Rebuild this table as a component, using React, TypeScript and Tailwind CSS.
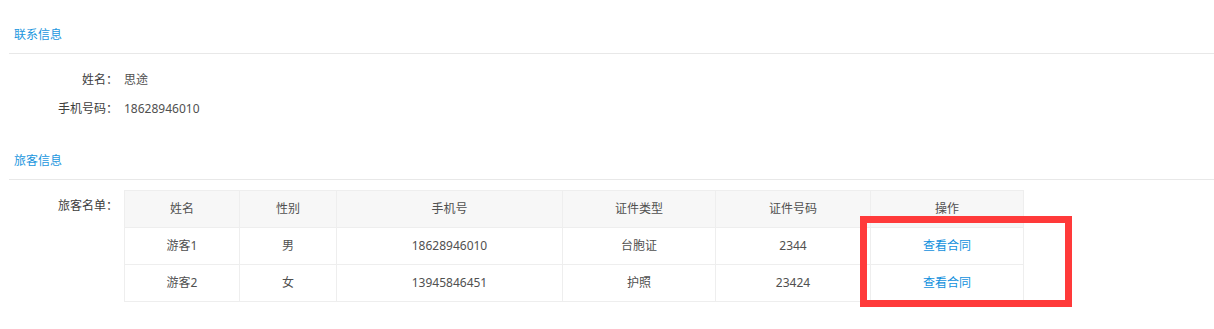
import React from 'react';

type Traveler = {
  name: string;
  gender: string;
  phone: string;
  idType: string;
  idNo: string;
};

const travelers: Traveler[] = [
  { name: '游客1', gender: '男', phone: '18628946010', idType: '台胞证', idNo: '2344' },
  { name: '游客2', gender: '女', phone: '13945846451', idType: '护照', idNo: '23424' },
];

const columns = [
  { title: '姓名', w: 'w-[115px]' },
  { title: '性别', w: 'w-[97px]' },
  { title: '手机号', w: 'w-[226px]' },
  { title: '证件类型', w: 'w-[153px]' },
  { title: '证件号码', w: 'w-[155px]' },
  { title: '操作', w: 'w-[153px]' },
];

function SectionTitle({ children, top }: { children: React.ReactNode; top: string }) {
  return (
    <div className={`${top} pb-[9px] pl-[5px] border-b border-[#e8e8e8] text-[12px] leading-[18px] text-[#1b96de]`}>
      {children}
    </div>
  );
}

function InfoRow({ label, value, className = '' }: { label: string; value: string; className?: string }) {
  return (
    <div className={`flex text-[12px] leading-[18px] ${className}`}>
      <span className="w-[109px] text-right text-[#3c3c3c]">{label}：</span>
      <span className="pl-[6px] text-[#505050]">{value}</span>
    </div>
  );
}

export default function App() {
  return (
    <div
      className="relative w-[1214px] h-[329px] bg-white overflow-hidden pl-[9px]"
      style={{ fontFamily: '"Noto Sans", "Noto Sans CJK SC", sans-serif' }}
    >
      {/* 联系信息 */}
      <SectionTitle top="pt-[26px]">联系信息</SectionTitle>
      <InfoRow label="姓名" value="思途" className="mt-[17px]" />
      <InfoRow label="手机号码" value="18628946010" className="mt-[11px]" />

      {/* 旅客信息 */}
      <SectionTitle top="pt-[34px]">旅客信息</SectionTitle>
      <div className="flex mt-[10px] text-[12px]">
        <span className="w-[109px] pt-[7px] leading-[18px] text-right text-[#3c3c3c]">旅客名单：</span>
        <table className="ml-[6px] border-collapse table-fixed text-[#505050]">
          <thead>
            <tr className="bg-[#f7f7f7]">
              {columns.map((c) => (
                <th key={c.title} className={`${c.w} h-[37px] p-0 border border-[#eeeeee] font-normal text-center`}>
                  {c.title}
                </th>
              ))}
            </tr>
          </thead>
          <tbody>
            {travelers.map((t) => (
              <tr key={t.name}>
                <td className="h-[37px] p-0 border border-[#eeeeee] text-center">{t.name}</td>
                <td className="p-0 border border-[#eeeeee] text-center">{t.gender}</td>
                <td className="p-0 border border-[#eeeeee] text-center">{t.phone}</td>
                <td className="p-0 border border-[#eeeeee] text-center">{t.idType}</td>
                <td className="p-0 border border-[#eeeeee] text-center">{t.idNo}</td>
                <td className="p-0 border border-[#eeeeee] text-center">
                  <a className="text-[#1190dd] cursor-pointer">查看合同</a>
                </td>
              </tr>
            ))}
          </tbody>
        </table>
      </div>

      {/* 标记框 */}
      <div className="absolute left-[860px] top-[216px] w-[212px] h-[91px] border-[7px] border-[#ff3a3a] pointer-events-none" />
    </div>
  );
}
